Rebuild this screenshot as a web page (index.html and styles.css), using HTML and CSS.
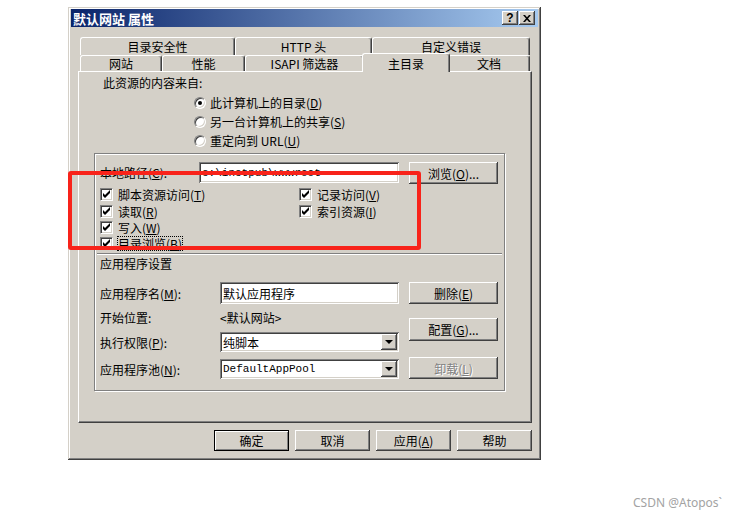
FILE: index.html
```html
<!DOCTYPE html>
<html lang="zh-CN">
<head>
    <meta charset="UTF-8">
    <title>默认网站 属性</title>
    <link rel="stylesheet" href="styles.css">
</head>
<body>

<div class="dialog">
    <div class="titlebar">
        <span class="title">默认网站 属性</span>
        <div class="caption-btns">
            <span class="cap-btn help">?</span>
            <span class="cap-btn">
                <svg width="8" height="7" viewBox="0 0 8 7"><path d="M0 0h2l2 2.2L6 0h2L5 3.5L8 7H6L4 4.8L2 7H0l3-3.5z" fill="#000"/></svg>
            </span>
        </div>
    </div>

    <div class="tabs">
        <div class="tab-row back">
            <div class="tab" style="width:155px">目录安全性</div>
            <div class="tab" style="width:137px">HTTP 头</div>
            <div class="tab" style="width:158px">自定义错误</div>
        </div>
        <div class="tab-row front">
            <div class="tab" style="width:82px">网站</div>
            <div class="tab" style="width:83px">性能</div>
            <div class="tab" style="width:119px">ISAPI 筛选器</div>
            <div class="tab sel" style="width:88px">主目录</div>
            <div class="tab" style="width:82px">文档</div>
        </div>
    </div>

    <div class="panel">
        <div class="source-label">此资源的内容来自:</div>
        <div class="radios">
            <div class="radio-row"><span class="radio on"></span>此计算机上的目录(<u>D</u>)</div>
            <div class="radio-row"><span class="radio"></span>另一台计算机上的共享(<u>S</u>)</div>
            <div class="radio-row"><span class="radio"></span>重定向到 URL(<u>U</u>)</div>
        </div>

        <div class="frame">
            <div class="path-row">
                <span class="lbl">本地路径(<u>C</u>):</span>
                <span class="field path mono">c:\inetpub\wwwroot</span>
                <span class="btn browse">浏览(<u>O</u>)...</span>
            </div>

            <div class="checks">
                <div class="check-col left">
                    <div class="check"><span class="box"><svg width="9" height="9" viewBox="0 0 9 9"><path d="M1 3L3 5L8 0V3L3 8L1 6Z"/></svg></span>脚本资源访问(<u>T</u>)</div>
                    <div class="check"><span class="box"><svg width="9" height="9" viewBox="0 0 9 9"><path d="M1 3L3 5L8 0V3L3 8L1 6Z"/></svg></span>读取(<u>R</u>)</div>
                    <div class="check"><span class="box"><svg width="9" height="9" viewBox="0 0 9 9"><path d="M1 3L3 5L8 0V3L3 8L1 6Z"/></svg></span>写入(<u>W</u>)</div>
                    <div class="check"><span class="box"><svg width="9" height="9" viewBox="0 0 9 9"><path d="M1 3L3 5L8 0V3L3 8L1 6Z"/></svg></span><span class="focus">目录浏览(<u>B</u>)</span></div>
                </div>
                <div class="check-col">
                    <div class="check"><span class="box"><svg width="9" height="9" viewBox="0 0 9 9"><path d="M1 3L3 5L8 0V3L3 8L1 6Z"/></svg></span>记录访问(<u>V</u>)</div>
                    <div class="check"><span class="box"><svg width="9" height="9" viewBox="0 0 9 9"><path d="M1 3L3 5L8 0V3L3 8L1 6Z"/></svg></span>索引资源(<u>I</u>)</div>
                </div>
            </div>

            <div class="sep"></div>
            <div class="section">应用程序设置</div>

            <div class="app">
                <div class="app-left">
                    <div class="app-row name">
                        <span class="app-lbl">应用程序名(<u>M</u>):</span>
                        <span class="field wide">默认应用程序</span>
                    </div>
                    <div class="app-row start">
                        <span class="app-lbl">开始位置:</span>
                        <span>&lt;默认网站&gt;</span>
                    </div>
                    <div class="app-row exec">
                        <span class="app-lbl">执行权限(<u>P</u>):</span>
                        <span class="field wide combo"><span class="combo-text">纯脚本</span><span class="drop"></span></span>
                    </div>
                    <div class="app-row pool">
                        <span class="app-lbl">应用程序池(<u>N</u>):</span>
                        <span class="field wide combo"><span class="combo-text mono">DefaultAppPool</span><span class="drop"></span></span>
                    </div>
                </div>
                <div class="app-right">
                    <span class="btn remove">删除(<u>E</u>)</span>
                    <span class="btn config">配置(<u>G</u>)...</span>
                    <span class="btn unload disabled">卸载(<u>L</u>)</span>
                </div>
            </div>
        </div>
    </div>

    <div class="actions">
        <span class="btn act default">确定</span>
        <span class="btn act">取消</span>
        <span class="btn act">应用(<u>A</u>)</span>
        <span class="btn act">帮助</span>
    </div>

    <!-- красная рамка-пометка поверх диалога -->
    <div class="annotation"></div>
</div>

<div class="watermark">CSDN @Atopos`</div>

</body>
</html>
```

FILE: styles.css
```css
body {
    margin: 0;
    width: 735px;
    height: 516px;
    overflow: hidden;
    background: #fff;
    font-family: "Noto Sans CJK SC", "Noto Sans", sans-serif;
    font-size: 12px;
    color: #000;
    position: relative;
}
u { text-decoration: underline; text-underline-offset: 1px; }
.mono { font-family: "Liberation Mono", "Noto Sans CJK SC", monospace; font-size: 11px; }

/* window */
.dialog {
    position: relative;
    box-sizing: border-box;
    margin: 7px 0 0 68px;
    width: 473px;
    height: 453px;
    padding: 2px 3px;
    background: #d4d0c8;
    box-shadow: inset -1px -1px #404040, inset 1px 1px #d4d0c8, inset -2px -2px #808080, inset 2px 2px #fff;
}
.titlebar {
    height: 18px;
    display: flex;
    align-items: center;
    justify-content: space-between;
    padding: 0 3px 0 2px;
    background: linear-gradient(to right, #0a246a, #a6caf0);
    color: #fff;
    font-weight: bold;
    font-size: 13px;
}
.caption-btns { display: flex; gap: 1px; }
.cap-btn {
    width: 16px;
    height: 14px;
    box-sizing: border-box;
    display: flex;
    align-items: center;
    justify-content: center;
    background: #d4d0c8;
    color: #000;
    font-family: "Liberation Sans", sans-serif;
    font-size: 12px;
    font-weight: bold;
    box-shadow: inset -1px -1px #404040, inset 1px 1px #fff, inset -2px -2px #808080;
}

/* tabs */
.tabs { margin: 10px 6px 0 7px; }
.tab-row { display: flex; padding: 0 2px; }
.tab {
    box-sizing: border-box;
    display: flex;
    align-items: center;
    justify-content: center;
    background: #d4d0c8;
    border-top: 1px solid #fff;
    border-left: 1px solid #fff;
    border-right: 1px solid #404040;
    border-radius: 3px 3px 0 0;
    box-shadow: inset -1px 0 #808080;
}
.back .tab { height: 18px; }
.front .tab { height: 16px; }
.front .tab.sel {
    height: 19px;
    margin: -2px -2px -1px;
    position: relative;
    z-index: 1;
}

/* panel */
.panel {
    box-sizing: border-box;
    height: 352px;
    margin: 0 6px 0 7px;
    border-top: 1px solid #fff;
    border-left: 1px solid #fff;
    border-right: 1px solid #404040;
    border-bottom: 1px solid #404040;
    box-shadow: inset -1px -1px #808080;
}
.source-label { margin-top: 4px; padding-left: 24px; line-height: 14px; }
.radios { margin-top: 3px; padding-left: 115px; }
.radio-row { height: 19px; display: flex; align-items: center; }
.radio {
    box-sizing: border-box;
    width: 12px;
    height: 12px;
    margin-right: 4px;
    border-radius: 50%;
    border: 1px solid;
    border-color: #808080 #fff #fff #808080;
    background: #fff;
    box-shadow: inset 1px 1px #404040, inset -1px -1px #d4d0c8;
    position: relative;
}
.radio.on::after {
    content: "";
    position: absolute;
    left: 3px;
    top: 3px;
    width: 4px;
    height: 4px;
    border-radius: 50%;
    background: #000;
}

.frame {
    box-sizing: border-box;
    margin: 3px 0 0 15px;
    width: 411px;
    height: 238px;
    border: 1px solid #808080;
    box-shadow: inset 1px 1px #fff, 1px 1px #fff;
}
.path-row { display: flex; align-items: flex-start; margin-top: 8px; padding-left: 5px; height: 22px; }
.lbl { width: 99px; line-height: 21px; }

.field {
    box-sizing: border-box;
    background: #fff;
    box-shadow: inset 1px 1px #808080, inset -1px -1px #fff, inset 2px 2px #404040, inset -2px -2px #d4d0c8;
    padding: 0 3px;
    display: flex;
    align-items: center;
}
.field.path { width: 200px; height: 21px; }
.field.wide { width: 179px; height: 22px; }

.btn {
    box-sizing: border-box;
    display: flex;
    align-items: center;
    justify-content: center;
    background: #d4d0c8;
    box-shadow: inset -1px -1px #404040, inset 1px 1px #fff, inset -2px -2px #808080;
}
.browse { margin-left: 10px; width: 89px; height: 22px; }

.checks { display: flex; margin-top: 4px; padding-left: 5px; height: 65px; }
.check-col { display: grid; grid-template-rows: 17px 16px 16px 16px; align-content: start; }
.check-col.left { width: 199px; }
.check { display: flex; align-items: flex-start; line-height: 13px; }
.box {
    box-sizing: border-box;
    width: 13px;
    height: 13px;
    margin-right: 5px;
    background: #fff;
    border: 1px solid;
    border-color: #808080 #fff #fff #808080;
    box-shadow: inset 1px 1px #404040, inset -1px -1px #d4d0c8;
    padding: 1px;
}
.box svg { display: block; }
.focus { outline: 1px dotted #000; outline-offset: 0; }

.sep { margin: 0 2px; border-top: 1px solid #808080; border-bottom: 1px solid #fff; }
.section { margin-top: 2px; padding-left: 5px; line-height: 14px; }

.app { display: flex; margin-top: 11px; padding-left: 5px; }
.app-left { width: 299px; display: flex; flex-direction: column; }
.app-row { display: flex; align-items: center; }
.app-lbl { width: 120px; }
.app-row.name { height: 22px; }
.app-row.start { height: 24px; margin-top: 1px; }
.app-row.exec { height: 20px; margin-top: 3px; }
.app-row.pool { height: 20px; margin-top: 7px; }
.app-row.exec .field, .app-row.pool .field { height: 20px; }
.combo { padding-right: 2px; justify-content: space-between; }
.drop {
    width: 16px;
    height: 16px;
    background: #d4d0c8;
    box-shadow: inset -1px -1px #404040, inset 1px 1px #fff, inset -2px -2px #808080;
    position: relative;
}
.drop::after {
    content: "";
    position: absolute;
    left: 4px;
    top: 6px;
    border-left: 4px solid transparent;
    border-right: 4px solid transparent;
    border-top: 4px solid #000;
}

.app-right { margin-left: 10px; display: flex; flex-direction: column; }
.app-right .btn { width: 89px; }
.remove { height: 22px; }
.config { height: 23px; margin-top: 14px; }
.unload { height: 22px; margin-top: 16px; }
.disabled { color: #808080; text-shadow: 1px 1px #fff; }

/* bottom buttons */
.actions { display: flex; justify-content: flex-end; gap: 6px; margin: 7px 6px 0 0; }
.act { width: 75px; height: 21px; }
.act.default { border: 1px solid #000; box-shadow: inset 1px 1px #fff, inset -1px -1px #808080; }

.annotation {
    position: absolute;
    left: 0;
    top: 164px;
    width: 353px;
    height: 79px;
    box-sizing: border-box;
    border: 4px solid #f8231a;
    border-radius: 3px;
}

.watermark {
    position: absolute;
    left: 633px;
    top: 494px;
    font-family: "Noto Sans", sans-serif;
    font-size: 12px;
    color: #a3a3a3;
}
```
